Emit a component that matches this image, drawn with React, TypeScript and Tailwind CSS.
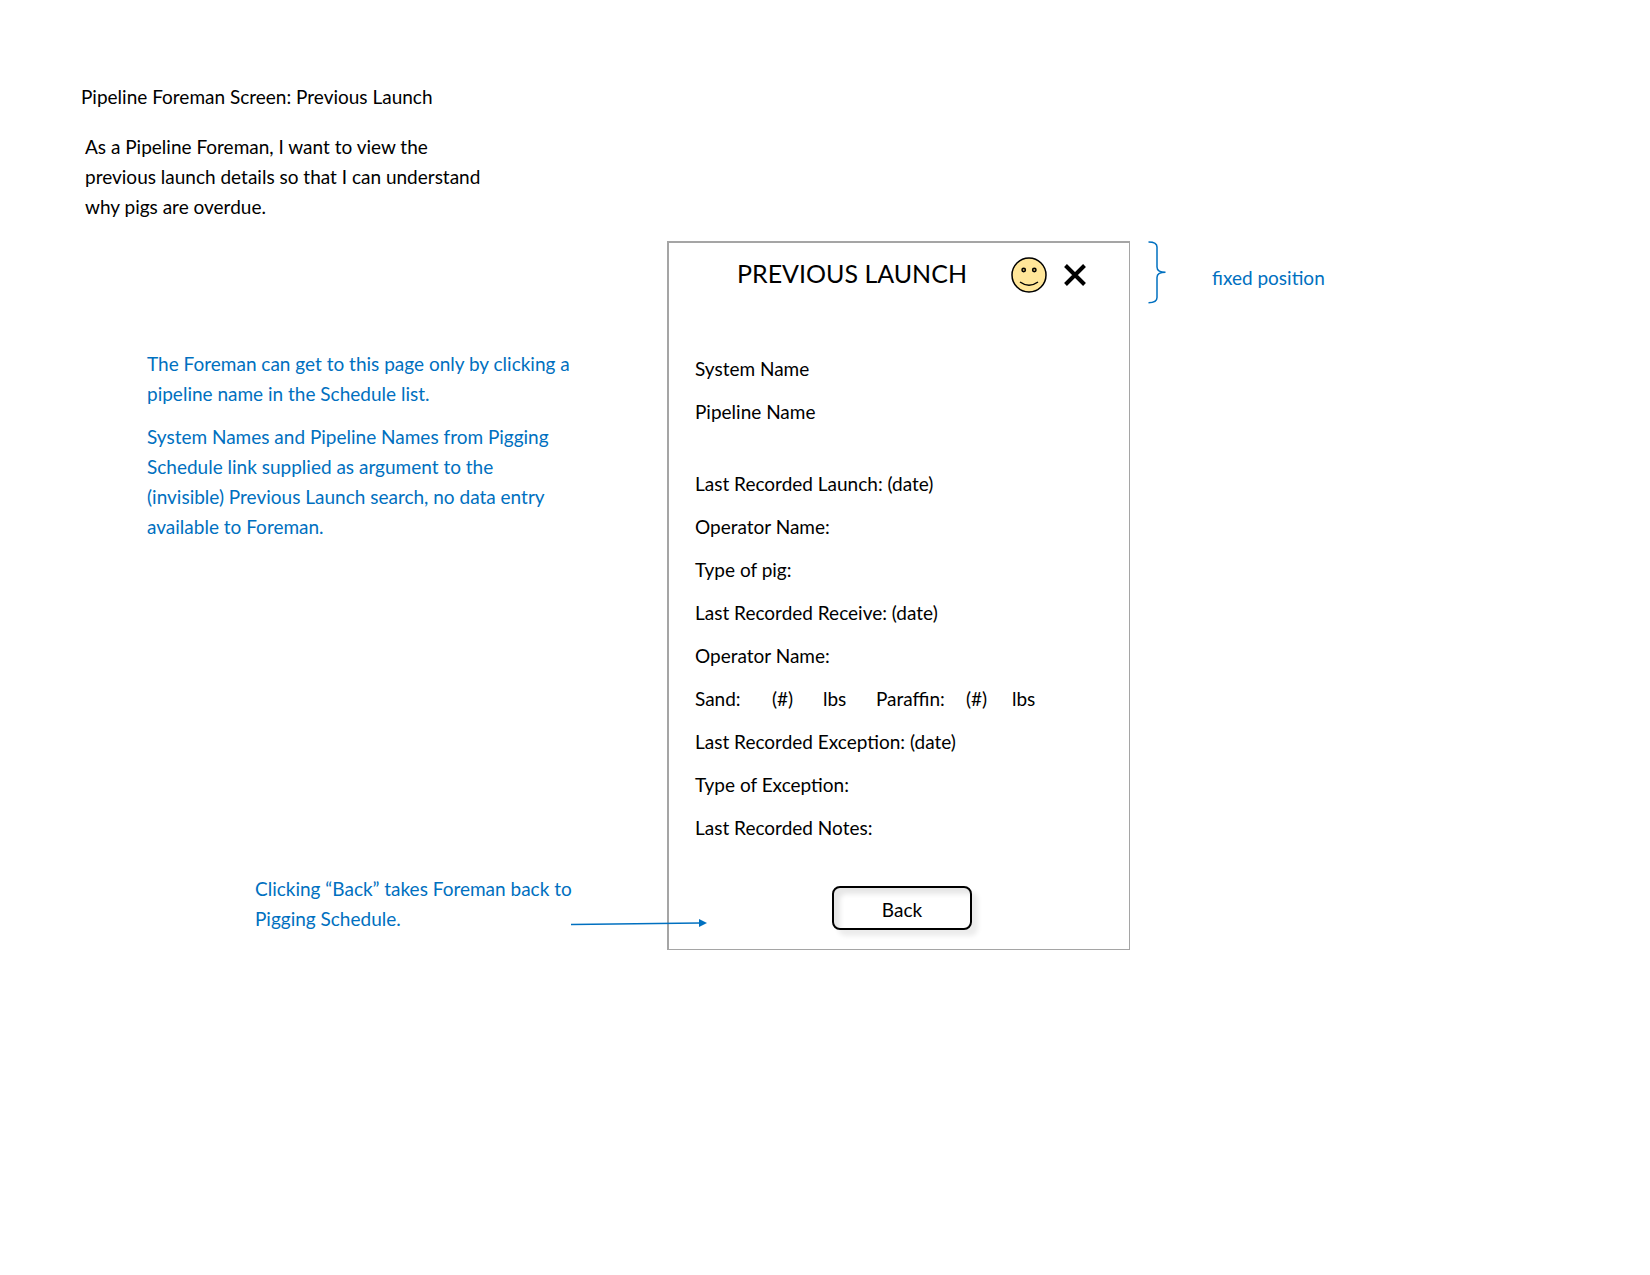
import React from "react";

const identityFields = ["System Name", "Pipeline Name"];
const launchFields = [
  "Last Recorded Launch: (date)",
  "Operator Name:",
  "Type of pig:",
  "Last Recorded Receive: (date)",
  "Operator Name:",
];
const exceptionFields = [
  "Last Recorded Exception: (date)",
  "Type of Exception:",
  "Last Recorded Notes:",
];

function Smiley() {
  return (
    <svg width="36" height="36" viewBox="0 0 36 36" fill="none" stroke="#000" strokeWidth="1.5" aria-hidden="true">
      <circle cx="18" cy="18" r="17" fill="#ffe699" />
      <circle cx="12.7" cy="13" r="1.7" fill="#c4ab63" />
      <circle cx="23.3" cy="13" r="1.7" fill="#c4ab63" />
      <path d="M9 25Q18 31.5 27 25" />
    </svg>
  );
}

function Cross() {
  return (
    <svg width="24" height="24" viewBox="0 0 24 24" fill="none" stroke="#000" strokeWidth="4" aria-hidden="true">
      <path d="M2.5 2.5L21.5 21.5M21.5 2.5L2.5 21.5" />
    </svg>
  );
}

function Brace() {
  return (
    <svg width="18" height="63" viewBox="0 0 18 63" fill="none" stroke="#0070c0" strokeWidth="1.5" aria-hidden="true">
      <path d="M0.5 1C6 1 9 2.5 9 6V26C9 29.5 12 31.3 17.5 31.3C12 31.3 9 33 9 36.5V56.5C9 60 6 61.7 0.5 61.7" />
    </svg>
  );
}

function Arrow() {
  return (
    <svg width="136" height="10" viewBox="0 0 136 10" fill="none" aria-hidden="true">
      <path d="M0 6.5L129 5" stroke="#0070c0" strokeWidth="1.5" />
      <path d="M128 1L136 4.9L128 9Z" fill="#0070c0" />
    </svg>
  );
}

function Field({ children }: { children: React.ReactNode }) {
  return <p>{children}</p>;
}

export default function App() {
  return (
    <main className="min-h-screen bg-white font-['Lato',sans-serif] text-[19px] leading-[30px] text-black">
      <header className="flex h-[241px] flex-col gap-5 pl-[81px] pt-[82px]">
        <h1>Pipeline Foreman Screen: Previous Launch</h1>
        <p className="w-[410px] pl-1">
          As a Pipeline Foreman, I want to view the previous launch details so that I can understand why pigs are
          overdue.
        </p>
      </header>

      <div className="grid grid-cols-[667fr_463fr_520fr]">
        <aside className="relative flex flex-col justify-between pb-4 pt-[108px] text-[#0070c0]">
          <div className="ml-[147px] flex w-[425px] flex-col gap-[13px]">
            <p>The Foreman can get to this page only by clicking a pipeline name in the Schedule list.</p>
            <p>
              System Names and Pipeline Names from Pigging Schedule link supplied as argument to the (invisible)
              Previous Launch search, no data entry available to Foreman.
            </p>
          </div>
          <p className="ml-[255px] w-[340px]">Clicking “Back” takes Foreman back to Pigging Schedule.</p>
          <div className="absolute -right-10 bottom-[22px] z-10">
            <Arrow />
          </div>
        </aside>

        <section className="flex flex-col border-b border-l-2 border-r border-t-2 border-[#a5a5a5] pb-[19px]">
          <div className="flex h-16 items-center justify-end pr-[42px]">
            <h2 className="mr-11 pb-1 text-[25px]">PREVIOUS LAUNCH</h2>
            <Smiley />
            <button type="button" aria-label="Close" className="ml-4">
              <Cross />
            </button>
          </div>

          <div className="flex flex-col gap-[13px] pl-[26px] pt-[47px]">
            {identityFields.map((label) => (
              <Field key={label}>{label}</Field>
            ))}
          </div>
          <div className="flex flex-col gap-[13px] pl-[26px] pt-[42px]">
            {launchFields.map((label, index) => (
              <Field key={index}>{label}</Field>
            ))}
            <p className="flex">
              <span className="w-[77px]">Sand:</span>
              <span className="w-[51px]">(#)</span>
              <span className="w-[53px]">lbs</span>
              <span className="w-[90px]">Paraffin:</span>
              <span className="w-[46px]">(#)</span>
              <span>lbs</span>
            </p>
            {exceptionFields.map((label) => (
              <Field key={label}>{label}</Field>
            ))}
          </div>

          <button
            type="button"
            className="ml-[163px] mt-[43px] h-11 w-[140px] rounded-lg border-2 border-black pt-1 shadow-[inset_6px_6px_5px_#e7e7e7,6px_6px_5px_#ececec]"
          >
            Back
          </button>
        </section>

        <aside className="flex items-start pl-[18px] text-[#0070c0]">
          <Brace />
          <p className="ml-[46px] pt-[22px]">fixed position</p>
        </aside>
      </div>
    </main>
  );
}
